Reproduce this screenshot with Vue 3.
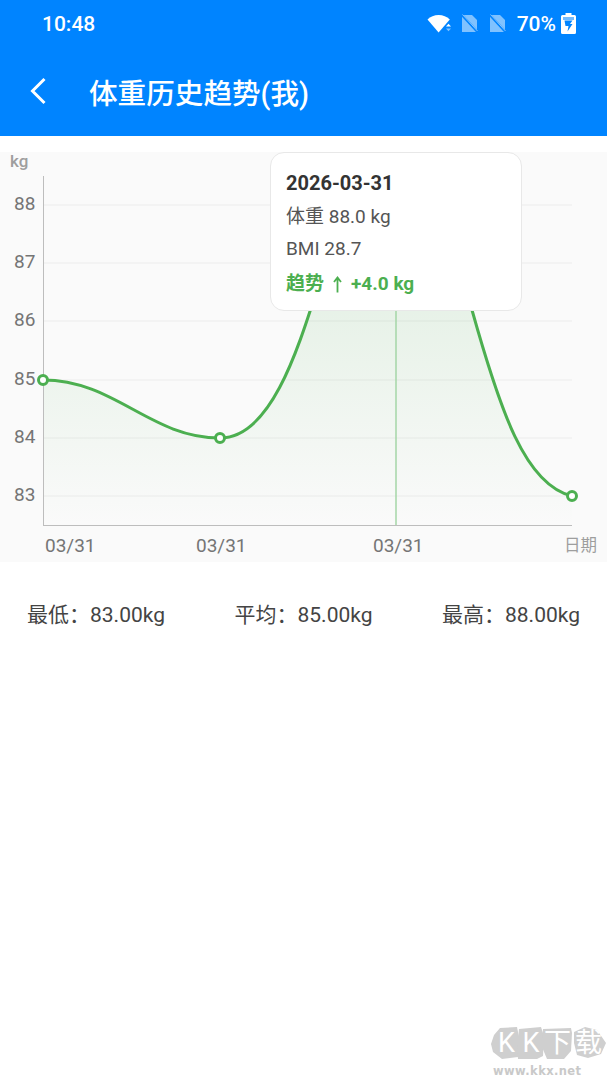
<template>
  <div class="page">
    <header class="top">
      <div class="status">
        <span class="time">10:48</span>
        <div class="status-right">
          <svg class="wifi" width="25" height="19" viewBox="0 0 25 19">
            <path d="M0.500 5.500C3.500 2.600 7.200 1 11.600 1s8.200 1.600 11.200 4.500L11.600 18.500z" fill="#fff" />
            <path d="M19 12.500l2.500-2.800 2.500 2.800z" fill="#fff" />
            <path d="M19 14.500l2.500 2.800 2.500-2.800z" fill="#fff" opacity=".5" />
          </svg>
          <svg class="sim" width="17" height="19" viewBox="0 0 17 19">
            <path d="M1 1h10L16 6v12H1z" fill="#fff" opacity=".5" />
            <path d="M0.500 0.500L16.500 18" stroke="#0084ff" stroke-width="2.400" />
            <path d="M1.500 0.500L16.500 17" stroke="#fff" stroke-width="1" opacity=".5" />
          </svg>
          <svg class="sim sim2" width="17" height="19" viewBox="0 0 17 19">
            <path d="M1 1h10L16 6v12H1z" fill="#fff" opacity=".5" />
            <path d="M0.500 0.500L16.500 18" stroke="#0084ff" stroke-width="2.400" />
            <path d="M1.500 0.500L16.500 17" stroke="#fff" stroke-width="1" opacity=".5" />
          </svg>
          <span class="pct">70%</span>
          <svg class="batt" width="15" height="21" viewBox="0 0 15 21">
            <path d="M4.500 0h6v2h3a1.500 1.500 0 0 1 1.500 1.500V19.500A1.500 1.500 0 0 1 13.500 21h-12A1.500 1.500 0 0 1 0 19.500V3.500A1.500 1.500 0 0 1 1.500 2h3z" fill="#fff" />
            <path d="M2 4h11v3H2z" fill="#0084ff" opacity=".55" />
            <path d="M3.500 7.500h8L9 11h2.500L6.500 18.500 7.500 13H4.500z" fill="#0084ff" />
          </svg>
        </div>
      </div>
      <div class="bar">
        <svg class="back" width="18" height="28" viewBox="0 0 18 28">
          <path d="M15.500 2L3.500 14l12 12" fill="none" stroke="#fff" stroke-width="3" />
        </svg>
        <span class="title">体重历史趋势(我)</span>
      </div>
    </header>

    <section class="chart">
      <svg class="plot" width="607" height="410" viewBox="0 152 607 410">
        <defs>
          <linearGradient id="fillG" gradientUnits="userSpaceOnUse" x1="0" y1="205" x2="0" y2="525">
            <stop offset="0" stop-color="#4caf50" stop-opacity=".16" />
            <stop offset="1" stop-color="#4caf50" stop-opacity="0" />
          </linearGradient>
        </defs>
        <line v-for="g in grid" :key="g.label" x1="44" x2="572" :y1="g.y" :y2="g.y" stroke="#f0f0f0" stroke-width="1.500" />
        <path :d="curve + ' L572 525 L43 525 Z'" fill="url(#fillG)" />
        <line x1="43.500" x2="43.500" y1="176" y2="525" stroke="#bdbdbd" />
        <line x1="43" x2="572" y1="525.500" y2="525.500" stroke="#bdbdbd" />
        <line x1="396" x2="396" y1="205" y2="525" stroke="#a5d6a7" stroke-width="1.500" />
        <path :d="curve" fill="none" stroke="#4caf50" stroke-width="3" />
        <circle v-for="p in dots" :key="p[0]" :cx="p[0]" :cy="p[1]" r="4.500" fill="#fff" stroke="#4caf50" stroke-width="3" />
        <text x="10" y="167" class="unit">kg</text>
        <text v-for="g in grid" :key="'t' + g.label" x="14" :y="g.y + 5" class="tick">{{ g.label }}</text>
        <text x="45" y="552" class="tick">03/31</text>
        <text x="196" y="552" class="tick">03/31</text>
        <text x="373" y="552" class="tick">03/31</text>
        <text x="564" y="551" class="unit day">日期</text>
      </svg>
      <div class="tip">
        <div class="tip-date">2026-03-31</div>
        <div class="tip-line">体重 88.0 kg</div>
        <div class="tip-line bmi">BMI 28.7</div>
        <div class="tip-trend">
          <span>趋势</span>
          <svg class="arrow" width="9" height="17" viewBox="0 0 9 17">
            <path d="M4.500 16.500V2M1 6l3.500-4.500L8 6" fill="none" stroke="#4caf50" stroke-width="1.800" />
          </svg>
          <span>+4.0 kg</span>
        </div>
      </div>
    </section>

    <section class="stats">
      <span>最低：83.00kg</span>
      <span>平均：85.00kg</span>
      <span>最高：88.00kg</span>
    </section>

    <div class="mark">
      <svg width="117" height="34" viewBox="0 0 117 34" class="stones">
        <path d="M4 9L10 2l17-1 2 10-1 20-16 2-9-7-2-8z" />
        <path d="M29 3l22-2 3 9-1 20-6 3-19 0-1-12z" />
        <path d="M53 3l28-1 1 5-1 18-7 8-17 0-5-12z" />
        <path d="M84 6l11-5 12 3 9 13-5 11-13 4-11-3-3-12z" />
      </svg>
      <div class="kk"><span>K</span><span>K</span><span>下</span><span>载</span></div>
      <div class="url">www.kkx.net</div>
    </div>
  </div>
</template>

<script setup>
const grid = [
  { label: 88, y: 205 },
  { label: 87, y: 263 },
  { label: 86, y: 321 },
  { label: 85, y: 380 },
  { label: 84, y: 438 },
  { label: 83, y: 496 }
]
const dots = [
  [43, 380],
  [220, 438],
  [572, 496]
]
const curve =
  'M43 380 C115 380 150 438 220 438 C290 438 315 270 340 228 C360 205 375 205 396 205 C420 205 450 235 472 310 C500 410 525 485 572 496'
</script>

<style>
html,
body {
  margin: 0;
  background: #fff;
}
</style>

<style scoped>
.page {
  position: relative;
  width: 607px;
  height: 1080px;
  overflow: hidden;
  background: #fff;
  font-family: Roboto, "Noto Sans CJK SC", sans-serif;
}
.top {
  height: 136px;
  background: #0084ff;
  color: #fff;
}
.status {
  height: 46px;
  display: flex;
  align-items: center;
  justify-content: space-between;
  padding: 0 31px 0 42px;
}
.time {
  padding-top: 1px;
  font-size: 21px;
  font-weight: 500;
}
.status-right {
  display: flex;
  align-items: center;
}
.sim {
  margin-left: 9px;
}
.sim2 {
  margin-left: 11px;
}
.pct {
  margin-left: 11px;
  padding-top: 1px;
  font-size: 21px;
  font-weight: 500;
}
.batt {
  margin-left: 5px;
}
.bar {
  height: 90px;
  display: flex;
  align-items: center;
  padding-left: 29px;
}
.title {
  margin-left: 42px;
  font-size: 28.600px;
  font-weight: 500;
}
.chart {
  position: relative;
  height: 410px;
  margin-top: 16px;
  background: #fafafa;
}
.plot {
  display: block;
}
.tick {
  font-size: 19px;
  fill: #757575;
}
.unit {
  font-size: 17px;
  font-weight: 500;
  fill: #9e9e9e;
}
.day {
  font-weight: 400;
  font-size: 16.500px;
}
.tip {
  position: absolute;
  left: 270px;
  top: 0;
  box-sizing: border-box;
  width: 252px;
  height: 159px;
  padding: 15px 15px 0;
  background: #fff;
  border: 1.500px solid #e8e8e8;
  border-radius: 14px;
}
.tip-date {
  font-size: 20px;
  line-height: 30px;
  font-weight: 700;
  color: #333;
}
.tip-line {
  margin-top: 2px;
  font-size: 19px;
  line-height: 30px;
  color: #555;
}
.tip-line:nth-child(2) {
  margin-top: 4px;
}
.tip-trend {
  display: flex;
  align-items: center;
  margin-top: 5px;
  font-size: 19px;
  line-height: 30px;
  font-weight: 700;
  color: #4caf50;
}
.arrow {
  margin: 0 9px;
}
.stats {
  display: flex;
  justify-content: space-between;
  padding: 38px 27px 0;
  font-size: 21px;
  line-height: 30px;
  color: #444;
}
.mark {
  position: absolute;
  left: 490px;
  top: 1026px;
  width: 117px;
  height: 54px;
}
.stones {
  position: absolute;
  left: 0;
  top: 0;
  fill: #cfcfcf;
}
.kk {
  position: absolute;
  left: 4px;
  top: 0;
  height: 34px;
  display: grid;
  grid-template-columns: 25px 24px 29px 33px;
  justify-items: center;
  align-items: center;
  font-size: 27px;
  line-height: 34px;
  color: #fff;
}
.url {
  position: absolute;
  left: 3px;
  top: 38px;
  font-family: "DejaVu Sans", sans-serif;
  font-size: 11.500px;
  line-height: 15px;
  font-weight: 700;
  letter-spacing: 0.400px;
  color: #c9c9c9;
}
</style>
